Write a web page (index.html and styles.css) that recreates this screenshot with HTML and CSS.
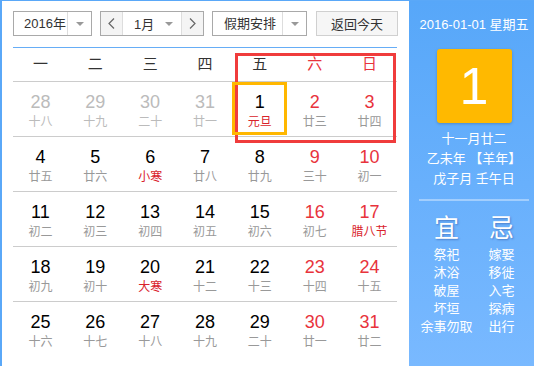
FILE: index.html
```html
<!DOCTYPE html>
<html lang="zh-CN">
<head>
    <meta charset="UTF-8">
    <meta name="viewport" content="width=device-width, initial-scale=1.0">
    <title>万年历</title>
    <link rel="stylesheet" href="styles.css">
</head>
<body>
    <div class="calendar">
        <div class="main">
            <!-- 工具栏 -->
            <div class="toolbar">
                <div class="select year">
                    <span class="select-text">2016年</span>
                    <span class="select-arrow"><i class="caret"></i></span>
                </div>
                <div class="month-group">
                    <button class="nav">
                        <svg width="7" height="11" viewBox="0 0 7 11"><polyline points="6,0.5 1,5.5 6,10.5" fill="none" stroke="#666" stroke-width="1.2"/></svg>
                    </button>
                    <div class="month-select">
                        <span>1月</span>
                        <i class="caret"></i>
                    </div>
                    <button class="nav">
                        <svg width="7" height="11" viewBox="0 0 7 11"><polyline points="1,0.5 6,5.5 1,10.5" fill="none" stroke="#666" stroke-width="1.2"/></svg>
                    </button>
                </div>
                <div class="select holiday">
                    <span class="select-text">假期安排</span>
                    <span class="select-arrow"><i class="caret"></i></span>
                </div>
                <button class="today-btn">返回今天</button>
            </div>

            <!-- 日历表格 -->
            <div class="grid">
                <div class="weekdays">
                    <div>一</div><div>二</div><div>三</div><div>四</div><div>五</div>
                    <div class="red">六</div><div class="red">日</div>
                </div>
                <div class="week">
                    <div class="day other"><b>28</b><span>十八</span></div>
                    <div class="day other"><b>29</b><span>十九</span></div>
                    <div class="day other"><b>30</b><span>二十</span></div>
                    <div class="day other"><b>31</b><span>廿一</span></div>
                    <div class="day today"><b>1</b><span class="fest">元旦</span></div>
                    <div class="day weekend"><b>2</b><span>廿三</span></div>
                    <div class="day weekend"><b>3</b><span>廿四</span></div>
                </div>
                <div class="week">
                    <div class="day"><b>4</b><span>廿五</span></div>
                    <div class="day"><b>5</b><span>廿六</span></div>
                    <div class="day"><b>6</b><span class="fest">小寒</span></div>
                    <div class="day"><b>7</b><span>廿八</span></div>
                    <div class="day"><b>8</b><span>廿九</span></div>
                    <div class="day weekend"><b>9</b><span>三十</span></div>
                    <div class="day weekend"><b>10</b><span>初一</span></div>
                </div>
                <div class="week">
                    <div class="day"><b>11</b><span>初二</span></div>
                    <div class="day"><b>12</b><span>初三</span></div>
                    <div class="day"><b>13</b><span>初四</span></div>
                    <div class="day"><b>14</b><span>初五</span></div>
                    <div class="day"><b>15</b><span>初六</span></div>
                    <div class="day weekend"><b>16</b><span>初七</span></div>
                    <div class="day weekend"><b>17</b><span class="fest">腊八节</span></div>
                </div>
                <div class="week">
                    <div class="day"><b>18</b><span>初九</span></div>
                    <div class="day"><b>19</b><span>初十</span></div>
                    <div class="day"><b>20</b><span class="fest">大寒</span></div>
                    <div class="day"><b>21</b><span>十二</span></div>
                    <div class="day"><b>22</b><span>十三</span></div>
                    <div class="day weekend"><b>23</b><span>十四</span></div>
                    <div class="day weekend"><b>24</b><span>十五</span></div>
                </div>
                <div class="week last">
                    <div class="day"><b>25</b><span>十六</span></div>
                    <div class="day"><b>26</b><span>十七</span></div>
                    <div class="day"><b>27</b><span>十八</span></div>
                    <div class="day"><b>28</b><span>十九</span></div>
                    <div class="day"><b>29</b><span>二十</span></div>
                    <div class="day weekend"><b>30</b><span>廿一</span></div>
                    <div class="day weekend"><b>31</b><span>廿二</span></div>
                </div>
                <div class="weekend-box"></div>
            </div>
        </div>

        <!-- 右侧详情 -->
        <div class="side">
            <div class="side-date">2016-01-01 星期五</div>
            <div class="big-day">1</div>
            <div class="lunar">
                <div>十一月廿二</div>
                <div>乙未年 【羊年】</div>
                <div>戊子月 壬午日</div>
            </div>
            <div class="divider"></div>
            <div class="almanac">
                <div class="almanac-col">
                    <div class="almanac-title">宜</div>
                    <div>祭祀</div>
                    <div>沐浴</div>
                    <div>破屋</div>
                    <div>坏垣</div>
                    <div>余事勿取</div>
                </div>
                <div class="almanac-col">
                    <div class="almanac-title">忌</div>
                    <div>嫁娶</div>
                    <div>移徙</div>
                    <div>入宅</div>
                    <div>探病</div>
                    <div>出行</div>
                </div>
            </div>
        </div>
    </div>
</body>
</html>
```

FILE: styles.css
```css
* {
    margin: 0;
    padding: 0;
    box-sizing: border-box;
}

body {
    font-family: "Liberation Sans", "Noto Sans CJK SC", sans-serif;
    background: #fff;
    color: #333;
    overflow: hidden;
}

.calendar {
    display: flex;
    height: 366px;
    border-left: 2px solid #5aa8f8;
    border-top: 1px solid #5aa8f8;
}

.main {
    width: 407px;
    padding: 10px 0 0 11px;
    background: #fff;
}

/* 工具栏 */
.toolbar {
    display: flex;
    height: 25px;
    margin-bottom: 11px;
}

.select {
    display: flex;
    height: 25px;
    border: 1px solid #a9a9a9;
    background: #fff;
    font-size: 13px;
    color: #333;
}

.select-text {
    flex: 1;
    line-height: 23px;
}

.select-arrow {
    width: 24px;
    border-left: 1px solid #ddd;
    display: flex;
    align-items: center;
    justify-content: center;
}

.caret {
    width: 0;
    height: 0;
    border-left: 4px solid transparent;
    border-right: 4px solid transparent;
    border-top: 4px solid #999;
}

.year {
    width: 79px;
    margin-right: 8px;
}

.year .select-text {
    padding-left: 10px;
}

.holiday {
    width: 95px;
    margin-right: 9px;
}

.holiday .select-text {
    padding-left: 11px;
}

.month-group {
    display: flex;
    width: 104px;
    height: 25px;
    border: 1px solid #a9a9a9;
    margin-right: 8px;
}

.nav {
    width: 21px;
    height: 23px;
    border: none;
    background: #f4f4f4;
    display: flex;
    align-items: center;
    justify-content: center;
}

.month-select {
    width: 60px;
    border-left: 1px solid #ddd;
    border-right: 1px solid #ddd;
    display: flex;
    align-items: center;
    justify-content: space-between;
    padding: 0 8px 0 11px;
    font-size: 13px;
    color: #333;
}

.today-btn {
    width: 82px;
    height: 25px;
    border: 1px solid #d0d0d0;
    background: #f6f6f6;
    font-family: inherit;
    font-size: 13px;
    color: #333;
}

/* 日历表格 */
.grid {
    position: relative;
    width: 384px;
    border-top: 1px solid #66adf6;
}

.weekdays {
    display: grid;
    grid-template-columns: repeat(7, 1fr);
    height: 34px;
    border-bottom: 1px solid #ccc;
    font-size: 15px;
    color: #333;
    text-align: center;
    line-height: 32px;
}

.weekdays .red {
    color: #e8333c;
}

.week {
    display: grid;
    grid-template-columns: repeat(7, 1fr);
    height: 55px;
    border-bottom: 1px solid #ccc;
}

.week.last {
    border-bottom: none;
}

.day {
    display: flex;
    flex-direction: column;
    align-items: center;
    padding-top: 10px;
}

.day b {
    font-size: 18px;
    font-weight: normal;
    line-height: 20px;
    color: #000;
}

.day span {
    margin-top: 2px;
    font-size: 12px;
    line-height: 16px;
    color: #999;
}

.day.weekend b {
    color: #e8333c;
}

.day.other b,
.day.other span {
    color: #bbb;
}

.day span.fest {
    color: #d9232b;
}

.day.today {
    position: relative;
    z-index: 1;
    box-shadow: inset 0 0 0 3px #ffb700;
    height: 53px;
}

.weekend-box {
    position: absolute;
    left: 222px;
    top: 5px;
    width: 161px;
    height: 90px;
    border: 3px solid #f03c3c;
}

/* 右侧详情 */
.side {
    flex: 1;
    background: linear-gradient(#57a7f9, #79b9ff);
    color: #fff;
    padding: 14px 0 0 5px;
    text-align: center;
    font-size: 13px;
}

.side-date {
    line-height: 20px;
}

.big-day {
    width: 75px;
    height: 74px;
    margin: 14px auto 0;
    background: #ffb900;
    border-radius: 3px;
    box-shadow: 0 1px 3px rgba(0, 0, 0, 0.2);
    font-size: 52px;
    line-height: 74px;
}

.lunar {
    margin-top: 6px;
    line-height: 20px;
}

.divider {
    height: 2px;
    margin: 10px 5px 0;
    background: #a2cefd;
}

.almanac {
    display: flex;
    margin: 12px 5px 0;
    line-height: 18px;
}

.almanac-col {
    flex: 1;
}

.almanac-title {
    font-size: 25px;
    line-height: 30px;
    margin-bottom: 3px;
    text-shadow: 1px 1px 2px rgba(30, 60, 140, 0.45);
}
```
